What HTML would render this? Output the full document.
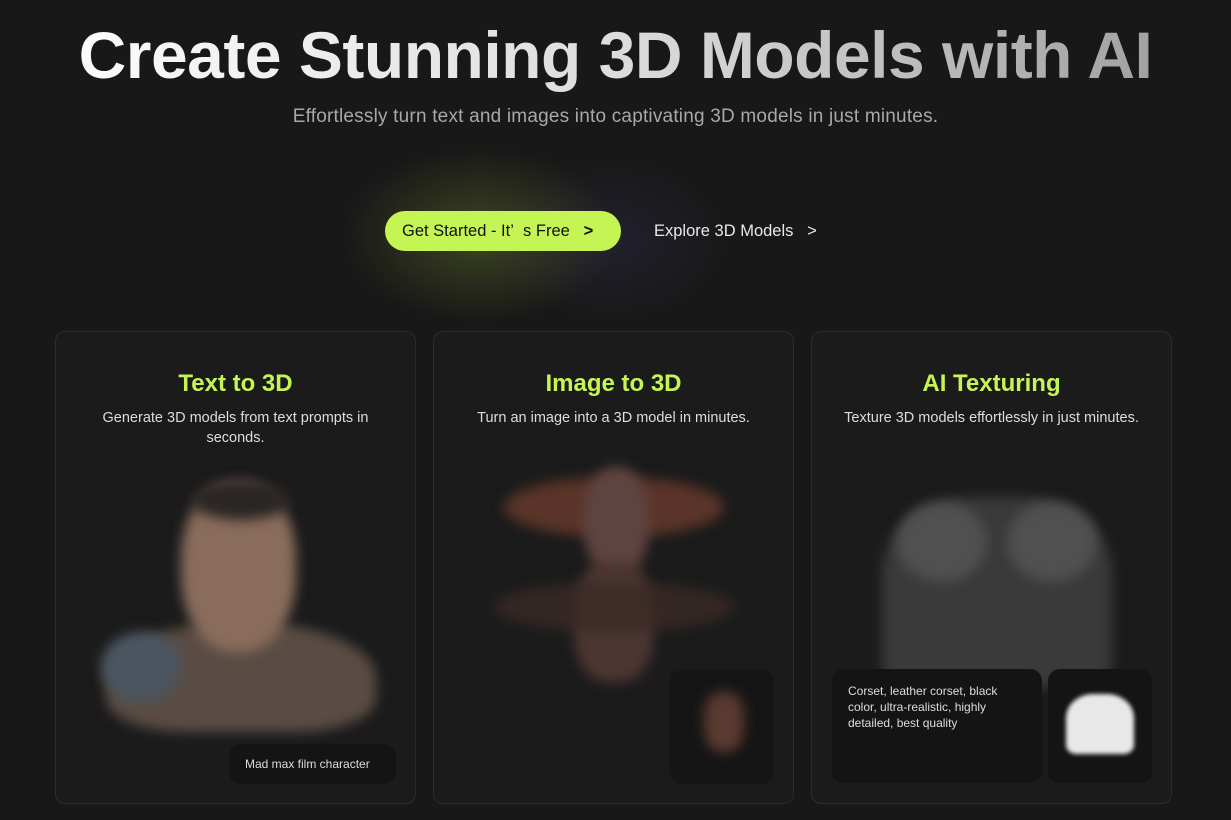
<!DOCTYPE html>
<html><head><style>
*{margin:0;padding:0;box-sizing:border-box}
body{width:1231px;height:820px;overflow:hidden;background:#181818;font-family:"Liberation Sans",sans-serif;position:relative}
h1{position:absolute;top:15px;left:0;width:1231px;text-align:center;font-size:66px;font-weight:bold;letter-spacing:-0.5px;background:linear-gradient(90deg,#fff 0%,#ddd 50%,#999 100%);-webkit-background-clip:text;color:transparent;line-height:80px}
.sub{position:absolute;top:106px;width:1231px;text-align:center;font-size:19px;letter-spacing:0.2px;color:#a8a8a8}
.glow{position:absolute;left:330px;top:140px;width:300px;height:190px;background:radial-gradient(ellipse,rgba(190,230,60,0.22),transparent 65%)}
.glow2{position:absolute;left:480px;top:150px;width:260px;height:180px;background:radial-gradient(ellipse,rgba(80,70,140,0.18),transparent 65%)}
.btn{position:absolute;left:385px;top:211px;width:236px;height:40px;border-radius:20px;background:#c5f554;color:#111;font-size:16.5px;line-height:40px;padding-left:17px}
.btn2{position:absolute;left:654px;top:211px;line-height:40px;font-size:16.5px;color:#e8e8e8}
.card{position:absolute;top:331px;width:361px;height:473px;border:1px solid #2c2c2c;border-radius:10px;background:#1b1b1b;overflow:hidden}
.card h2{margin-top:38px;text-align:center;color:#c5f554;font-size:24px;font-weight:bold}
.card p{margin:10px auto 0;width:300px;text-align:center;color:#ddd;font-size:14.5px;line-height:20px}
.blob{position:absolute;filter:blur(6px)}
.tag{position:absolute;background:#141414;border-radius:12px;color:#ddd;font-size:12px}
</style></head><body>
<div class="glow"></div><div class="glow2"></div>
<h1>Create Stunning 3D Models with AI</h1>
<div class="sub">Effortlessly turn text and images into captivating 3D models in just minutes.</div>
<div class="btn">Get Started - It’&nbsp;&nbsp;s Free&nbsp;&nbsp;&nbsp;<b>&gt;</b></div>
<div class="btn2">Explore 3D Models&nbsp;&nbsp;&nbsp;&gt;</div>

<div class="card" style="left:55px">
<h2>Text to 3D</h2>
<p>Generate 3D models from text prompts in seconds.</p>
<div class="blob" style="left:50px;top:290px;width:270px;height:110px;border-radius:50% 50% 30% 30%;background:#5a4c44"></div>
<div class="blob" style="left:125px;top:150px;width:115px;height:170px;border-radius:45%;background:#8a6c5c"></div>
<div class="blob" style="left:135px;top:148px;width:100px;height:40px;border-radius:50%;background:#2a2624"></div>
<div class="blob" style="left:45px;top:300px;width:80px;height:70px;border-radius:50%;background:#4a5560"></div>
<div class="tag" style="left:173px;top:412px;width:167px;height:40px;line-height:40px;padding-left:16px">Mad max film character</div>
</div>

<div class="card" style="left:433px">
<h2>Image to 3D</h2>
<p>Turn an image into a 3D model in minutes.</p>
<div class="blob" style="left:70px;top:145px;width:220px;height:60px;border-radius:50%;background:#5a3428"></div>
<div class="blob" style="left:150px;top:135px;width:65px;height:110px;border-radius:45%;background:#5e4440"></div>
<div class="blob" style="left:140px;top:230px;width:80px;height:120px;border-radius:40%;background:#4c3632"></div>
<div class="blob" style="left:60px;top:250px;width:240px;height:50px;border-radius:50%;background:#3a2a26;opacity:.8"></div>
<div class="tag" style="left:236px;top:338px;width:104px;height:114px;background:#151515"></div>
<div class="blob" style="left:270px;top:360px;width:40px;height:60px;border-radius:40%;background:#5a3a30"></div>
</div>

<div class="card" style="left:811px">
<h2>AI Texturing</h2>
<p>Texture 3D models effortlessly in just minutes.</p>
<div class="blob" style="left:70px;top:165px;width:230px;height:190px;border-radius:40% 40% 10% 10%;background:#3a3a3a"></div>
<div class="blob" style="left:85px;top:170px;width:90px;height:80px;border-radius:50%;background:#505050"></div>
<div class="blob" style="left:195px;top:170px;width:90px;height:80px;border-radius:50%;background:#505050"></div>
<div class="tag" style="left:20px;top:337px;width:210px;height:114px;padding:14px 16px;line-height:16px">Corset, leather corset, black color, ultra-realistic, highly detailed, best quality</div>
<div class="tag" style="left:236px;top:337px;width:104px;height:114px"></div>
<div class="blob" style="left:254px;top:362px;width:68px;height:60px;border-radius:40% 40% 15% 15%;background:#e8e8e8;filter:blur(2px)"></div>
</div>
</body></html>
